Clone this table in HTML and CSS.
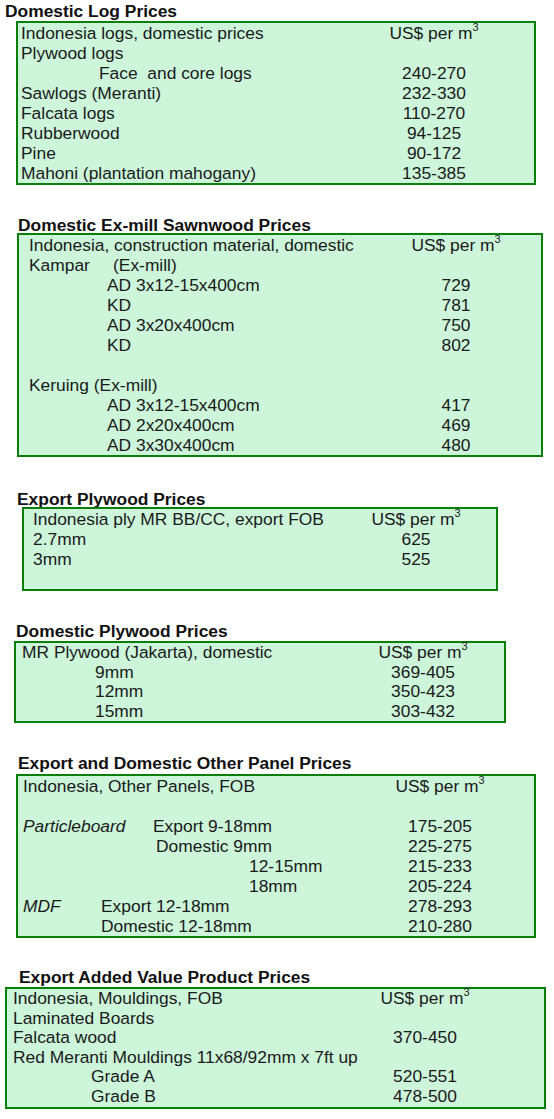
FILE: index.html
```html
<!DOCTYPE html>
<html lang="en">
<head>
<meta charset="utf-8">
<title>Indonesia Prices</title>
<link rel="stylesheet" href="styles.css">
</head>
<body>
<main class="page">

  <section class="sec sec-logs">
    <h2 class="title">Domestic Log Prices</h2>
    <div class="box">
      <div class="row"><span class="lbl">Indonesia logs, domestic prices</span><span class="val">US$ per m<sup>3</sup></span></div>
      <div class="row"><span class="lbl">Plywood logs</span><span class="val"></span></div>
      <div class="row"><span class="lbl ind">Face &nbsp;and core logs</span><span class="val">240-270</span></div>
      <div class="row"><span class="lbl">Sawlogs (Meranti)</span><span class="val">232-330</span></div>
      <div class="row"><span class="lbl">Falcata logs</span><span class="val">110-270</span></div>
      <div class="row"><span class="lbl">Rubberwood</span><span class="val">94-125</span></div>
      <div class="row"><span class="lbl">Pine</span><span class="val">90-172</span></div>
      <div class="row"><span class="lbl">Mahoni (plantation mahogany)</span><span class="val">135-385</span></div>
    </div>
  </section>

  <section class="sec sec-sawn">
    <h2 class="title">Domestic Ex-mill Sawnwood Prices</h2>
    <div class="box">
      <div class="row"><span class="lbl">Indonesia, construction material, domestic</span><span class="val">US$ per m<sup>3</sup></span></div>
      <div class="row"><span class="lbl"><span class="tab tab-84">Kampar</span>(Ex-mill)</span><span class="val"></span></div>
      <div class="row"><span class="lbl ind">AD 3x12-15x400cm</span><span class="val">729</span></div>
      <div class="row"><span class="lbl ind">KD</span><span class="val">781</span></div>
      <div class="row"><span class="lbl ind">AD 3x20x400cm</span><span class="val">750</span></div>
      <div class="row"><span class="lbl ind">KD</span><span class="val">802</span></div>
      <div class="row"><span class="lbl"></span><span class="val"></span></div>
      <div class="row"><span class="lbl">Keruing (Ex-mill)</span><span class="val"></span></div>
      <div class="row"><span class="lbl ind">AD 3x12-15x400cm</span><span class="val">417</span></div>
      <div class="row"><span class="lbl ind">AD 2x20x400cm</span><span class="val">469</span></div>
      <div class="row"><span class="lbl ind">AD 3x30x400cm</span><span class="val">480</span></div>
    </div>
  </section>

  <section class="sec sec-expply">
    <h2 class="title">Export Plywood Prices</h2>
    <div class="box">
      <div class="row"><span class="lbl">Indonesia ply MR BB/CC, export FOB</span><span class="val">US$ per m<sup>3</sup></span></div>
      <div class="row"><span class="lbl">2.7mm</span><span class="val">625</span></div>
      <div class="row"><span class="lbl">3mm</span><span class="val">525</span></div>
      <div class="row"><span class="lbl"></span><span class="val"></span></div>
    </div>
  </section>

  <section class="sec sec-domply">
    <h2 class="title">Domestic Plywood Prices</h2>
    <div class="box">
      <div class="row"><span class="lbl">MR Plywood (Jakarta), domestic</span><span class="val">US$ per m<sup>3</sup></span></div>
      <div class="row"><span class="lbl ind-73">9mm</span><span class="val">369-405</span></div>
      <div class="row"><span class="lbl ind-73">12mm</span><span class="val">350-423</span></div>
      <div class="row"><span class="lbl ind-73">15mm</span><span class="val">303-432</span></div>
    </div>
  </section>

  <section class="sec sec-panel">
    <h2 class="title">Export and Domestic Other Panel Prices</h2>
    <div class="box">
      <div class="row"><span class="lbl">Indonesia, Other Panels, FOB</span><span class="val">US$ per m<sup>3</sup></span></div>
      <div class="row"><span class="lbl"></span><span class="val"></span></div>
      <div class="row"><span class="lbl"><i class="tab tab-130">Particleboard</i>Export 9-18mm</span><span class="val">175-205</span></div>
      <div class="row"><span class="lbl ind-133">Domestic 9mm</span><span class="val">225-275</span></div>
      <div class="row"><span class="lbl ind-226">12-15mm</span><span class="val">215-233</span></div>
      <div class="row"><span class="lbl ind-226">18mm</span><span class="val">205-224</span></div>
      <div class="row"><span class="lbl"><i class="tab tab-78">MDF</i>Export 12-18mm</span><span class="val">278-293</span></div>
      <div class="row"><span class="lbl ind">Domestic 12-18mm</span><span class="val">210-280</span></div>
    </div>
  </section>

  <section class="sec sec-avp">
    <h2 class="title">Export Added Value Product Prices</h2>
    <div class="box">
      <div class="row"><span class="lbl">Indonesia, Mouldings, FOB</span><span class="val">US$ per m<sup>3</sup></span></div>
      <div class="row"><span class="lbl">Laminated Boards</span><span class="val"></span></div>
      <div class="row"><span class="lbl">Falcata wood</span><span class="val">370-450</span></div>
      <div class="row"><span class="lbl">Red Meranti Mouldings 11x68/92mm x 7ft up</span><span class="val"></span></div>
      <div class="row"><span class="lbl ind">Grade A</span><span class="val">520-551</span></div>
      <div class="row"><span class="lbl ind">Grade B</span><span class="val">478-500</span></div>
    </div>
  </section>

</main>
</body>
</html>
```

FILE: styles.css
```css
html, body {
  margin: 0;
  padding: 0;
  background: #ffffff;
}

body {
  font-family: "Liberation Sans", Arial, sans-serif;
  font-size: 17.4px;
  color: #1a1a1a;
}

.page {
  display: flex;
  flex-direction: column;
  width: 554px;
}

.sec {
  display: flex;
  flex-direction: column;
  margin-top: var(--mt);
}

.title {
  margin: 0 0 0 var(--tx);
  font-size: 17.4px;
  font-weight: bold;
  line-height: 20px;
  height: 20px;
  color: #111111;
  white-space: nowrap;
}

.box {
  margin-top: var(--gap);
  margin-left: var(--bx);
  width: var(--bw);
  box-sizing: border-box;
  border: 2px solid #0a800a;
  background: #ccf5da;
  padding-left: var(--pl);
  display: flex;
  flex-direction: column;
}

.row {
  display: grid;
  grid-template-columns: var(--lw) 120px;
  height: var(--rh, 20px);
  line-height: var(--rh, 20px);
  white-space: nowrap;
}

.lbl {
  overflow: visible;
}

.val {
  text-align: center;
}

sup {
  font-size: 11px;
  line-height: 0;
  vertical-align: 8px;
}

.ind { padding-left: 78px; }
.ind-73 { padding-left: 73px; }
.ind-133 { padding-left: 133px; }
.ind-226 { padding-left: 226px; }

.tab {
  display: inline-block;
}
.tab-78 { width: 78px; }
.tab-84 { width: 84px; }
.tab-130 { width: 130px; }

/* per-section geometry */
.sec-logs {
  --mt: 1px;
  --tx: 5px;
  --gap: 0px;
  --bx: 16px;
  --bw: 520px;
  --pl: 3px;
  --lw: 353px;
}

.sec-sawn {
  --mt: 30px;
  --tx: 18px;
  --gap: -2px;
  --bx: 17px;
  --bw: 526px;
  --pl: 10px;
  --lw: 367px;
}

.sec-expply {
  --mt: 32px;
  --tx: 17px;
  --gap: -2px;
  --bx: 22px;
  --bw: 476px;
  --pl: 9px;
  --lw: 323px;
}

.sec-domply {
  --mt: 30px;
  --tx: 16px;
  --gap: 0px;
  --bx: 14px;
  --bw: 492px;
  --pl: 6px;
  --lw: 341px;
  --rh: 19.5px;
}

.sec-panel {
  --mt: 30px;
  --tx: 18px;
  --gap: 1px;
  --bx: 16px;
  --bw: 520px;
  --pl: 5px;
  --lw: 357px;
}

.sec-avp {
  --mt: 29px;
  --tx: 19px;
  --gap: 0px;
  --bx: 5px;
  --bw: 541px;
  --pl: 6px;
  --lw: 352px;
  --rh: 19.6px;
}
```
